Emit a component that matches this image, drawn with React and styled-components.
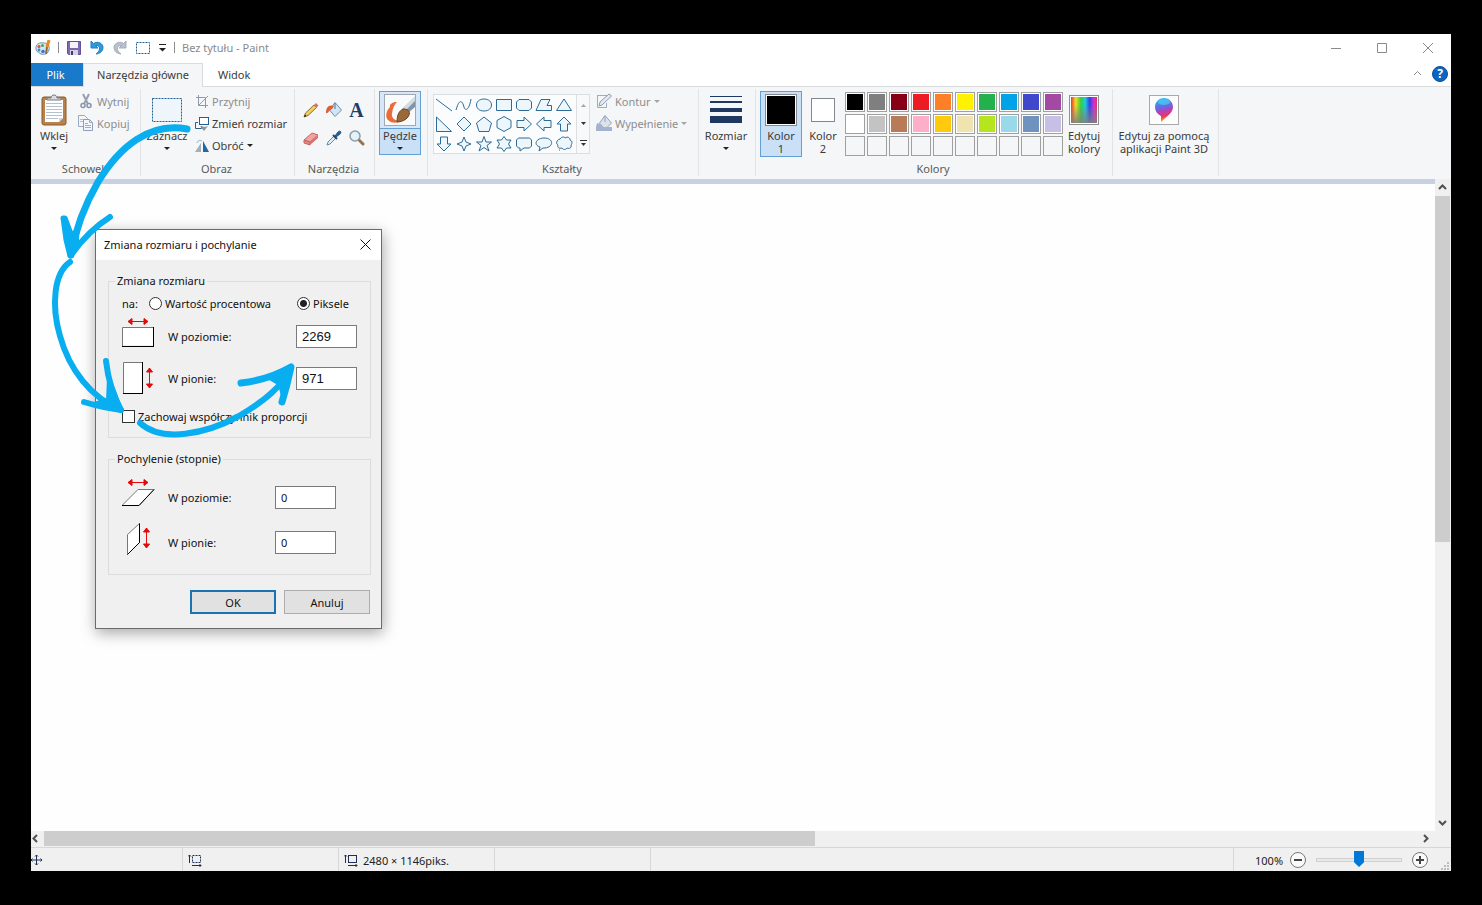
import React from 'react';
import styled, { createGlobalStyle, css } from 'styled-components';

const GlobalStyle = createGlobalStyle`
    * {
        box-sizing: border-box;
    }

    body {
        margin: 0;
        background: #000;
    }

    body, button, input {
        font-family: "Noto Sans", "Open Sans", sans-serif;
        font-size: 11px;
        line-height: 13px;
        color: #3b3b3b;
    }

    button {
        padding: 0;
        border: none;
        background: none;
    }

    svg {
        display: block;
        flex: none;
    }
`;

const Desktop = styled.div`
    min-height: 100vh;
    display: flex;
    padding: 34px 31px;
    background: #000;
`;

const Window = styled.div`
    position: relative;
    flex: 1;
    min-width: 0;
    display: flex;
    flex-direction: column;
    background: #fff;
`;

/* ---------- title bar ---------- */

const TitleBar = styled.header`
    height: 27px;
    display: flex;
    align-items: center;
    justify-content: space-between;
    padding-left: 4px;
`;

const QuickAccess = styled.div`
    display: flex;
    align-items: center;
    gap: 7px;
`;

const Divider = styled.span`
    width: 1px;
    height: 11px;
    background: #8c8c8c;
`;

const ToolButton = styled.button`
    width: 16px;
    display: flex;
    align-items: center;
    justify-content: center;
`;

const Title = styled.h1`
    margin: 0;
    font-size: 11px;
    font-weight: 400;
    color: #8a8a8a;
`;

const WindowButtons = styled.div`
    display: flex;

    button {
        width: 46px;
        height: 27px;
        display: flex;
        align-items: center;
        justify-content: center;
    }
`;

/* ---------- tabs ---------- */

const Tabs = styled.nav`
    height: 26px;
    display: flex;
    align-items: flex-end;
    border-bottom: 1px solid #dadbdc;
`;

const Tab = styled.button`
    height: 23px;
    padding: 0 15px;

    ${({ $kind }) => $kind === 'file' && css`
        min-width: 52px;
        padding: 0 18px 0 15px;
        background: #1979ca;
        color: #fff;
    `}

    ${({ $kind }) => $kind === 'active' && css`
        height: 24px;
        min-width: 120px;
        margin-bottom: -1px;
        padding: 0 13px 2px;
        background: #f5f6f7;
        border: 1px solid #dadbdc;
        border-bottom: none;
    `}
`;

const TabsRight = styled.div`
    margin-left: auto;
    height: 25px;
    padding-right: 3px;
    display: flex;
    align-items: center;
    gap: 10px;
`;

const Help = styled.button`
    width: 16px;
    height: 16px;
    border-radius: 50%;
    border: 1px solid #0a4f96;
    background: #0b66c3;
    color: #fff;
    font-weight: 700;
    font-size: 12px;
    line-height: 14px;
`;

/* ---------- ribbon ---------- */

const Ribbon = styled.div`
    display: flex;
    height: 92px;
    background: #f5f6f7;
`;

const Group = styled.section`
    flex: none;
    width: ${({ $width }) => $width}px;
    margin: 2px 0 3px;
    display: flex;
    flex-direction: column;
    border-right: 1px solid #e2e3e4;
`;

const GroupBody = styled.div`
    flex: 1;
    display: flex;
    align-items: flex-start;
    padding: 2px ${({ $pad }) => $pad || 4}px 0;
    gap: ${({ $gap }) => $gap || 0}px;
`;

const GroupName = styled.div`
    height: 14px;
    padding-right: 2px;
    text-align: center;
    color: #5a5a5a;
`;

const BigButton = styled.button`
    width: ${({ $width }) => $width || 42}px;
    height: 66px;
    flex: none;
    display: flex;
    flex-direction: column;
    align-items: center;
    border: 1px solid transparent;

    ${({ $on }) => $on && css`
        background: #c9e0f7;
        border-color: #629fd4;
    `}

    ${({ $split }) => $split && css`
        height: 64px;
        background: linear-gradient(#d5e7f8 36px, #629fd4 36px, #629fd4 37px, #c9e0f7 37px);
    `}
`;

const BigIcon = styled.span`
    height: 37px;
    display: flex;
    align-items: center;
    justify-content: center;
    padding-bottom: 1px;
    flex: none;
`;

const Column = styled.div`
    display: flex;
    flex-direction: column;
`;

const SmallButton = styled.button`
    height: 22px;
    display: flex;
    align-items: center;
    gap: 3px;
    padding-bottom: 2px;
    white-space: nowrap;
    color: ${({ disabled }) => (disabled ? '#8d8d8d' : '#3b3b3b')};
`;

const Caret = styled.i`
    width: 0;
    border: 3px solid transparent;
    border-top-color: ${({ $dim }) => ($dim ? '#a5a5a5' : '#222')};
    border-bottom: none;
    margin: ${({ $under }) => ($under ? '5px 0 0' : '0')};
`;

const ToolGrid = styled.div`
    display: grid;
    grid-template-columns: repeat(3, 23px);
    grid-template-rows: repeat(2, 28px);
    padding-top: 5px;

    button {
        display: flex;
        align-items: center;
        justify-content: center;
    }
`;

const Gallery = styled.div`
    display: flex;
    width: 157px;
    height: 60px;
    margin: 3px 3px 0 0;
    border: 1px solid #dcdfe2;
    background: #fbfcfd;
`;

const ShapeGrid = styled.div`
    flex: 1;
    display: grid;
    grid-template-columns: repeat(7, 20px);
    grid-template-rows: 19px 20px 20px;

    button {
        display: flex;
        align-items: center;
        justify-content: center;
    }
`;

const GalleryScroll = styled.div`
    width: 13px;
    display: flex;
    flex-direction: column;
    border-left: 1px solid #dcdfe2;
    background: #f8f9fa;

    button {
        flex: 1;
        display: flex;
        align-items: center;
        justify-content: center;
    }
`;

const Swatch = styled.span`
    width: ${({ $size }) => $size}px;
    height: ${({ $size }) => $size}px;
    border: 1px solid #828790;
    background: ${({ $color }) => $color};
    box-shadow: inset 0 0 0 1px #fff;
`;

const Palette = styled.div`
    display: grid;
    grid-template-columns: repeat(10, 20px);
    grid-auto-rows: 20px;
    gap: 2px;
    padding: 1px 0 0 1px;
`;

const PaletteCell = styled.button`
    border: 1px solid #a0a0a0;
    padding: 1px;
    background: ${({ $color }) => $color || '#f5f6f7'};
    background-clip: content-box;
    box-shadow: ${({ $color }) => ($color ? 'inset 0 0 0 1px #fff' : 'none')};
`;

/* ---------- workspace ---------- */

const Workspace = styled.main`
    flex: 1;
    display: flex;
    min-height: 0;
`;

const Canvas = styled.div`
    flex: 1;
    border-top: 5px solid #c8d0e2;
    background: #fefefe;
`;

const ScrollBar = styled.div`
    flex: none;
    display: flex;
    flex-direction: ${({ $vertical }) => ($vertical ? 'column' : 'row')};
    background: #f0f0f0;
    ${({ $vertical }) => ($vertical ? 'width: 16px; padding-right: 1px;' : 'height: 16px; padding: 0 17px 1px 0;')}

    button {
        flex: none;
        display: flex;
        align-items: center;
        justify-content: center;
        ${({ $vertical }) => ($vertical ? 'height: 17px;' : 'width: 13px; padding-right: 4px;')}
    }
`;

const Track = styled.div`
    flex: 1;
    display: flex;
    flex-direction: inherit;
`;

const Thumb = styled.div`
    flex: 0 0 ${({ $size }) => $size}%;
    background: #cdcdcd;
`;

const StatusBar = styled.footer`
    height: 24px;
    display: flex;
    background: #f0f0f0;
    border-top: 1px solid #d7d7d7;
    color: #222;
`;

const StatusCell = styled.div`
    width: ${({ $width }) => $width || 156}px;
    display: flex;
    align-items: center;
    gap: 5px;
    padding: 1px 0 0 ${({ $pad }) => $pad || 0}px;
    border-right: 1px solid #d7d7d7;
`;

const Zoom = styled.div`
    margin-left: auto;
    width: 218px;
    display: flex;
    align-items: center;
    padding: 1px 1px 0 21px;
    gap: 7px;
    border-left: 1px solid #d7d7d7;

    button {
        display: flex;
    }
`;

const Grip = styled.span`
    margin-left: auto;
    align-self: flex-end;
`;

const ZoomSlider = styled.input`
    appearance: none;
    width: 86px;
    height: 18px;
    margin: 0 3px;
    background: none;

    &::-webkit-slider-runnable-track {
        height: 4px;
        border: 1px solid #d0d0d0;
        background: #e7eaea;
    }

    &::-webkit-slider-thumb {
        appearance: none;
        width: 10px;
        height: 16px;
        margin-top: -8px;
        background: #0078d7;
        clip-path: polygon(0 0, 100% 0, 100% 70%, 50% 100%, 0 70%);
    }
`;

/* ---------- dialog ---------- */

const Dialog = styled.form`
    position: absolute;
    left: 64px;
    top: 195px;
    width: 287px;
    padding-bottom: 14px;
    border: 1px solid #6b6b6b;
    background: #f0f0f0;
    box-shadow: 1px 4px 14px rgba(0, 0, 0, 0.35);
    color: #111;
`;

const DialogHeader = styled.div`
    height: 30px;
    display: flex;
    align-items: center;
    justify-content: space-between;
    padding: 0 10px 2px 8px;
    background: #fff;

    h2 {
        margin: 0;
        font-size: 11px;
        font-weight: 400;
    }
`;

const FieldSet = styled.fieldset`
    margin: 14px 10px 0 12px;
    padding: ${({ $pad }) => $pad} 0;
    border: 1px solid #dcdcdc;
    min-width: 0;

    legend {
        margin-left: 6px;
        padding: 0 2px;
        height: 14px;
    }
`;

const UnitRow = styled.div`
    height: 22px;
    display: flex;
    align-items: center;
    padding-left: 13px;

    span {
        width: 27px;
    }
`;

const RatioRow = styled(UnitRow)`
    height: 34px;
`;

const Choice = styled.label`
    display: flex;
    align-items: center;
    gap: 3px;
    width: ${({ $width }) => ($width ? `${$width}px` : 'auto')};
    white-space: nowrap;

    input {
        appearance: none;
        flex: none;
        width: 13px;
        height: 13px;
        margin: 0;
        border: 1px solid #333;
        background: #fff;
    }

    input[type='radio'] {
        border-radius: 50%;
    }

    input[type='radio']:checked {
        background: radial-gradient(#222 0 3px, #fff 4px);
    }
`;

const FieldRow = styled.div`
    display: grid;
    grid-template-columns: 46px ${({ $label }) => $label}px 61px;
    align-items: center;
    height: ${({ $height }) => $height}px;
    padding-left: 13px;

    input {
        width: 61px;
        height: 23px;
        padding: 0 5px;
        border: 1px solid #7a7a7a;
        background: #fff;
        color: #111;
        ${({ $large }) => $large && css`
            font-family: "Liberation Sans", Arial, sans-serif;
            font-size: 13px;
        `}
    }
`;

const DialogActions = styled.div`
    display: flex;
    justify-content: flex-end;
    gap: 8px;
    padding: 15px 11px 0 0;
`;

const DialogButton = styled.button`
    width: 86px;
    height: 24px;
    background: #e1e1e1;
    color: #111;
    border: ${({ $primary }) => ($primary ? '2px solid #1a74b0' : '1px solid #adadad')};
`;

const Arrows = styled.svg`
    position: absolute;
    left: 0;
    top: 0;
    width: 340px;
    height: 420px;
    pointer-events: none;
`;

/* ---------- icons ---------- */

const Icon = ({ w = 16, h = 16, children }) => (
    <svg width={w} height={h} viewBox={`0 0 ${w} ${h}`} fill="none" aria-hidden="true">{children}</svg>
);

const PaintLogo = () => (
    <Icon>
        <path d="M1 9C0 4 5 2 9 3c4 0 6 3 5 7-1 4-5 5-8 4-2 0-1-2-3-2-1 0-2-2-2-3z" fill="#d5e7ef" stroke="#6d98ad" />
        <circle cx="4" cy="6.500" r="1.500" fill="#d9513b" />
        <circle cx="7.500" cy="5.500" r="1.500" fill="#4aa655" />
        <circle cx="4" cy="10" r="1.400" fill="#358cd1" />
        <circle cx="8" cy="11.500" r="1.800" fill="#3e78c9" />
        <path d="M14 0l-2 7" stroke="#e38a26" strokeWidth="3" />
        <path d="M12 7l-1 7" stroke="#92693e" strokeWidth="2" />
    </Icon>
);

const SaveIcon = () => (
    <Icon>
        <path d="M1.500 1.500h13v13h-12l-1-1z" fill="#8167ad" stroke="#66509a" />
        <path d="M4 2h8v6H4z" fill="#f5f3fa" />
        <path d="M4 10h8v5H4z" fill="#d0d5e3" />
        <path d="M5 11h2v4H5z" fill="#473a70" />
    </Icon>
);

const UndoIcon = ({ color, edge, flip }) => (
    <Icon>
        <path
            d="M2 1v7h7L6.500 5.500C9 5 11 6.500 10.500 9c-.3 2-1.500 3.500-3.500 5 4-.3 7-3 7-6.500C14 3.500 9 .5 4.500 3.500z"
            fill={color}
            stroke={edge}
            transform={flip ? 'translate(16 0) scale(-1 1)' : undefined}
        />
    </Icon>
);

const SelectIcon = ({ w, h }) => (
    <Icon w={w} h={h}>
        <rect x="0.500" y="0.500" width={w - 1} height={h - 1} fill={w > 20 ? '#eef5fb' : 'none'} stroke="#1f5f93" strokeDasharray="2 1" />
    </Icon>
);

const PasteIcon = () => (
    <Icon w={26} h={32}>
        <rect x="1" y="3" width="24" height="28" rx="2" fill="#b9824b" stroke="#8a5a2b" />
        <path d="M4 6h18v18l-4 4H4z" fill="#fff" />
        <path d="M22 24h-4v4z" fill="#cfd6df" />
        <path d="M5 9.500h16M5 12.500h16M5 15.500h16M5 18.500h16M5 21.500h16M5 24.500h12" stroke="#b5c0ce" />
        <path d="M6 6V4h4c0-4 6-4 6 0h4v2z" fill="#d9dce0" stroke="#777d86" />
    </Icon>
);

const CutIcon = () => (
    <Icon>
        <path d="M5 1l5 10M11 1L6 11" stroke="#98a1b3" strokeWidth="2" />
        <circle cx="5" cy="12.500" r="2" stroke="#8993a9" strokeWidth="1.500" />
        <circle cx="11" cy="12.500" r="2" stroke="#8993a9" strokeWidth="1.500" />
    </Icon>
);

const CopyIcon = () => (
    <Icon>
        <path d="M.5.500h6l3 3v8h-9z" fill="#f4f6fa" stroke="#9aa9c2" />
        <path d="M2 4.500h4M2 6.500h4" stroke="#b0bccf" />
        <path d="M5.500 4.500h6l3 3v8h-9z" fill="#f4f6fa" stroke="#8c9ebc" />
        <path d="M11.500 4.500v3h3M7 8.500h3M7 10.500h6M7 12.500h6" stroke="#9eadc5" />
    </Icon>
);

const CropIcon = () => (
    <Icon w={14}>
        <path d="M3.500 2v10.500H13M1 4.500h9.500V15M4 12L13 3" stroke="#8c99ae" />
    </Icon>
);

const ResizeIcon = () => (
    <Icon w={14}>
        <rect x="4.500" y="2.500" width="9" height="7" fill="#fff" stroke="#255f96" />
        <path d="M3 7.500H.5v6h6V11" stroke="#255f96" />
        <path d="M5 11l4 5 4-5-3 1z" fill="#8c9299" />
    </Icon>
);

const RotateIcon = () => (
    <Icon w={14}>
        <path d="M0 15L6 6v9z" fill="#a3afb9" />
        <path d="M8 4v11h6z" fill="#1e69a6" />
        <path d="M2 6c1-3 3-3 5-2" stroke="#8bb2d2" />
    </Icon>
);

const PencilIcon = () => (
    <Icon>
        <path d="M1 15l1.500-4L11 3l2.500 2.500L5 13.500z" fill="#f6cb58" stroke="#87703a" />
        <path d="M11 3l2-2 2.500 2.500-2 2z" fill="#d6736d" />
        <path d="M1 15l1-2.500L3.500 14z" fill="#222" />
    </Icon>
);

const BucketIcon = ({ dim }) => (
    <Icon>
        <path d="M9 .5L15.500 8 9 14.500 3.500 8z" fill={dim ? '#dbe2ec' : '#d1e5f4'} stroke={dim ? '#94a2ba' : '#6f8faa'} />
        <path d="M9 1v6" stroke={dim ? '#94a2ba' : '#56718a'} />
        {dim
            ? <path d="M0 12h16v4H0zM1 8l3 1 3 3H0z" fill="#a5b2cd" />
            : <path d="M8 4C3 2 0 5 0 11c2 1 3-3 6-4z" fill="#df5d31" />}
    </Icon>
);

const TextIcon = styled.span`
    font-family: "Liberation Serif", serif;
    font-size: 20px;
    line-height: 20px;
    font-weight: 700;
    color: #1f3e67;
`;

const EraserIcon = () => (
    <Icon>
        <path d="M1 10l8-7 6 2-8 7z" fill="#f1a39f" stroke="#c06863" />
        <path d="M1 10l6 2v3l-6-2z" fill="#e5837c" stroke="#c06863" />
        <path d="M7 12l8-7v3l-8 7z" fill="#d4726c" />
    </Icon>
);

const PickerIcon = () => (
    <Icon>
        <path d="M1 15l1-3 6-6 2 2-6 6z" fill="#ddf0fa" stroke="#658ba6" />
        <path d="M7 5l4 4" stroke="#1d4b7c" strokeWidth="2" />
        <path d="M9 6l3-4c2-2 4 0 2 2l-4 3z" fill="#2467a5" stroke="#1d4b7c" />
    </Icon>
);

const MagnifierIcon = () => (
    <Icon>
        <path d="M10 10l4 4" stroke="#967352" strokeWidth="3" strokeLinecap="round" />
        <circle cx="6" cy="6" r="5" fill="#e3f1fa" stroke="#8f9ba6" strokeWidth="1.500" />
    </Icon>
);

const BrushIcon = () => (
    <Icon w={32} h={32}>
        <rect x="0.500" y="0.500" width="31" height="31" fill="#f8fafc" stroke="#9fa9b3" />
        <path d="M13 8C9 8 5 10 6 13c-4 4-5 10-2 13 4 4 10 3 13 1-6 0-10-3-9-8s2-8 5-11z" fill="#ed6a36" />
        <path d="M31 3v10l-8 7-5-5z" fill="#8195a9" />
        <path d="M31 2L19 14l3 2L31 7z" fill="#d2dce5" />
        <path d="M13 28c0-7 2-12 7-13 5 0 7 4 4 8-2 3-7 5-11 5z" fill="#9b6938" stroke="#6f4722" />
    </Icon>
);

const OutlineIcon = () => (
    <Icon>
        <path d="M1.500 2.500h10M1.500 2v12.500h9V10" stroke="#a0abbd" />
        <path d="M3 13l1-4 9-8 2.500 2L6 12z" fill="#e5eaf2" stroke="#8e9bb1" />
    </Icon>
);

const SizeIcon = () => (
    <Icon w={32} h={30}>
        <path d="M0 1h32v1H0zM0 6h32v2H0zM0 13h32v4H0zM0 21h32v7H0z" fill="#1f3860" />
    </Icon>
);

const RainbowIcon = () => (
    <Icon w={30} h={30}>
        <defs>
            <linearGradient id="hue">
                <stop offset="0" stopColor="#f03030" />
                <stop offset="0.180" stopColor="#f0dc20" />
                <stop offset="0.380" stopColor="#30d040" />
                <stop offset="0.550" stopColor="#20c8e0" />
                <stop offset="0.720" stopColor="#3040e8" />
                <stop offset="0.880" stopColor="#d030d8" />
                <stop offset="1" stopColor="#e83060" />
            </linearGradient>
            <linearGradient id="fade" x2="0" y2="1">
                <stop offset="0.300" stopColor="#808080" stopOpacity="0" />
                <stop offset="1" stopColor="#808080" stopOpacity="0.900" />
            </linearGradient>
        </defs>
        <rect x="0.500" y="0.500" width="29" height="29" fill="#fff" stroke="#8f8f8f" />
        <rect x="2" y="2" width="26" height="26" fill="url(#hue)" />
        <rect x="2" y="2" width="26" height="26" fill="url(#fade)" />
    </Icon>
);

const Paint3DIcon = () => (
    <Icon w={30} h={30}>
        <defs>
            <linearGradient id="drop" x1="0.200" y1="0" x2="0.400" y2="1">
                <stop offset="0" stopColor="#27c5f0" />
                <stop offset="0.350" stopColor="#5b72e8" />
                <stop offset="0.600" stopColor="#b33fb8" />
                <stop offset="0.780" stopColor="#e5395c" />
                <stop offset="1" stopColor="#f8b21e" />
            </linearGradient>
        </defs>
        <rect x="0.500" y="0.500" width="29" height="29" fill="#fcfcfd" stroke="#a9a9a9" />
        <path d="M12 27v-6C8 19 6 16 6 12c0-5 4-9 9-9s9 4 9 9c0 6-6 9-12 15z" fill="url(#drop)" />
        <ellipse cx="15" cy="7" rx="6" ry="3" fill="#4fd6f3" opacity="0.600" />
        <path d="M7 15c4 4 12 2 16-4 0 6-5 9-10 10-3-1-5-3-6-6z" fill="#d738a0" opacity="0.500" />
    </Icon>
);

const Chevron = ({ turn = 0, color = '#505050', width = 2 }) => (
    <svg width="9" height="9" viewBox="0 0 9 9" fill="none" aria-hidden="true">
        <path d="M1 6l3.500-3.500L8 6" stroke={color} strokeWidth={width} transform={`rotate(${turn} 4.500 4.500)`} />
    </svg>
);

const shapes = [
    ['Linia', 'M1 3l16 12'],
    ['Krzywa', 'M1 14C5 0 8 7 9 11s5 4 7-8'],
    ['Owal', 'M9 3c10 0 10 12 0 12S-1 3 9 3z'],
    ['Prostokąt', 'M1.500 3.500h15v11h-15z'],
    ['Zaokrąglony prostokąt', 'M4 3.500h10l2.500 2.500v6L14 14.500H4L1.500 12V6z'],
    ['Wielokąt', 'M6 3.500h9l-3 6h4.500v5H1z'],
    ['Trójkąt', 'M9 3l7.500 11.500h-15z'],
    ['Trójkąt prostokątny', 'M1.500 2l15 14.500h-15z'],
    ['Romb', 'M9 2l7 7-7 7-7-7z'],
    ['Pięciokąt', 'M9 2l7.500 6L14 16.500H4L1.500 8z'],
    ['Sześciokąt', 'M9 1.500l7 4v7l-7 4-7-4v-7z'],
    ['Strzałka w prawo', 'M2 5.500h7V2l7.500 7L9 16v-3.500H2z'],
    ['Strzałka w lewo', 'M16 5.500H9V2L1.500 9 9 16v-3.500h7z'],
    ['Strzałka w górę', 'M5.500 16V9H2l7-7 7 7h-3.500v7z'],
    ['Strzałka w dół', 'M5.500 2v7H2l7 7 7-7h-3.500V2z'],
    ['Gwiazda czteroramienna', 'M9 2l2 5 5 2-5 2-2 5-2-5-5-2 5-2z'],
    ['Gwiazda pięcioramienna', 'M9 1.500l2 5.500h5.500L12 10.500l2 5.500-5-3.500L4 16l2-5.500L1.500 7H7z'],
    ['Gwiazda sześcioramienna', 'M9 1.500L11.500 5H16l-2.500 4 2.500 4h-4.500L9 16.500 6.500 13H2l2.500-4L2 5h4.500z'],
    ['Zaokrąglony dymek', 'M3.500 3h11l2 2v6l-2 2H9l-4 3v-3H3.500l-2-2V5z'],
    ['Owalny dymek', 'M9 3c10 0 10 9 1 10H8l-4 3 1-4C-2 10 1 3 9 3z'],
    ['Dymek myśli', 'M5 4c2-3 5-2 5-1 3-2 5 0 5 2 3 1 2 4 1 5 1 3-2 4-4 3-1 2-4 2-5 0-3 1-5-1-4-3-2-1-2-5 2-6zM4 15h1'],
];

const colors = [
    '#000000', '#7f7f7f', '#880015', '#ed1c24', '#ff7f27', '#fff200', '#22b14c', '#00a2e8', '#3f48cc', '#a349a4',
    '#ffffff', '#c3c3c3', '#b97a57', '#ffaec9', '#ffc90e', '#efe4b0', '#b5e61d', '#99d9ea', '#7092be', '#c8bfe7',
    null, null, null, null, null, null, null, null, null, null,
];

const RedArrowH = () => <path d="M6 4.500h20M6 4.500l4-3v6zM26 4.500l-4-3v6z" fill="#e00b0b" stroke="#e00b0b" />;
const RedArrowV = () => <path d="M27.500 6v20M27.500 6l-3 4h6zM27.500 26l-3-4h6z" fill="#e00b0b" stroke="#e00b0b" />;

const SizeH = () => (
    <Icon w={33} h={38}>
        <RedArrowH />
        <path d="M.5 29V10.500H31" stroke="#777" />
        <path d="M1 11h30v17H1z" fill="#fff" />
        <path d="M0 29.500h32M31.500 10v20" stroke="#000" />
    </Icon>
);

const SizeV = () => (
    <Icon w={33} h={34}>
        <path d="M1.500 31V.5H20" stroke="#777" />
        <path d="M2 1h18v30H2z" fill="#fff" />
        <path d="M1 31.500h20M20.500 0v32" stroke="#000" />
        <RedArrowV />
    </Icon>
);

const SkewH = () => (
    <Icon w={33} h={40}>
        <RedArrowH />
        <path d="M0 27.500L16 11.500h16l-15 16z" fill="#fff" stroke="#777" />
        <path d="M0 27.500h17l15-16" stroke="#000" />
    </Icon>
);

const SkewV = () => (
    <Icon w={33} h={40}>
        <path d="M5.500 31.500v-20l12-11v19z" fill="#fff" stroke="#777" />
        <path d="M5.500 31.500l12-12V.5" stroke="#000" />
        <g transform="translate(-3 -1)"><RedArrowV /></g>
    </Icon>
);

const MoveIcon = () => (
    <Icon w={12} h={12}>
        <path d="M0 6h11M5.500 1v10M4 2.500L5.500 1 7 2.500M4 9.500L5.500 11 7 9.500M9.500 4.500L11 6 9.500 7.500M1.500 4.500L0 6l1.500 1.500" stroke="#1f2f55" />
    </Icon>
);

const ExtentIcon = ({ dashed }) => (
    <Icon w={14} h={13}>
        <path d="M1.500 1v8M0 2.500L1.500 1 3 2.500M4 11.500h9M11.500 10l1.500 1.500-1.500 1.500" stroke="#1f2f55" />
        <rect x="4.500" y="1.500" width="8" height="7" stroke="#1f2f55" strokeDasharray={dashed ? '2 1' : undefined} />
    </Icon>
);

const ZoomIcon = ({ plus }) => (
    <Icon w={16} h={16}>
        <circle cx="8" cy="8" r="7.500" fill="#fafafa" stroke="#777" />
        <path d={plus ? 'M4 8h8M8 4v8' : 'M4 8h8'} stroke="#444" strokeWidth="2" />
    </Icon>
);

const GripIcon = () => (
    <Icon w={9} h={9}>
        <path d="M6 0h2v2H6zM3 3h2v2H3zM6 3h2v2H6zM0 6h2v2H0zM3 6h2v2H3zM6 6h2v2H6z" fill="#bcbcbc" />
    </Icon>
);

const App = () => (
    <>
        <GlobalStyle />
        <Desktop>
            <Window>
                <TitleBar>
                    <QuickAccess>
                        <PaintLogo />
                        <Divider />
                        <ToolButton aria-label="Zapisz"><SaveIcon /></ToolButton>
                        <ToolButton aria-label="Cofnij"><UndoIcon color="#2f9bdc" edge="#1f7fc0" /></ToolButton>
                        <ToolButton aria-label="Ponów"><UndoIcon color="#b7c0cb" edge="#a5b0bc" flip /></ToolButton>
                        <ToolButton aria-label="Zaznaczenie"><SelectIcon w={14} h={12} /></ToolButton>
                        <button aria-label="Dostosuj">
                            <Icon w={9} h={8}><path d="M1 .5h7" stroke="#222" /><path d="M1 4h7L4.500 7.500z" fill="#222" /></Icon>
                        </button>
                        <Divider />
                        <Title>Bez tytułu - Paint</Title>
                    </QuickAccess>
                    <WindowButtons>
                        <button aria-label="Minimalizuj"><Icon w={12} h={12}><path d="M1 6.500h10" stroke="#8a8a8a" /></Icon></button>
                        <button aria-label="Maksymalizuj"><Icon w={12} h={12}><path d="M1.500 1.500h9v9h-9z" stroke="#8a8a8a" /></Icon></button>
                        <button aria-label="Zamknij"><Icon w={12} h={12}><path d="M1 1l10 10M11 1L1 11" stroke="#8a8a8a" /></Icon></button>
                    </WindowButtons>
                </TitleBar>

                <Tabs>
                    <Tab $kind="file">Plik</Tab>
                    <Tab $kind="active">Narzędzia główne</Tab>
                    <Tab>Widok</Tab>
                    <TabsRight>
                        <button aria-label="Zwiń wstążkę"><Chevron color="#8a8a8a" width={1} /></button>
                        <Help>?</Help>
                    </TabsRight>
                </Tabs>

                <Ribbon>
                    <Group $width={110}>
                        <GroupBody $pad={2} $gap={3}>
                            <BigButton>
                                <BigIcon><PasteIcon /></BigIcon>
                                Wklej
                                <Caret $under />
                            </BigButton>
                            <Column>
                                <SmallButton disabled><CutIcon />Wytnij</SmallButton>
                                <SmallButton disabled><CopyIcon />Kopiuj</SmallButton>
                            </Column>
                        </GroupBody>
                        <GroupName>Schowek</GroupName>
                    </Group>

                    <Group $width={154}>
                        <GroupBody $gap={6}>
                            <BigButton $width={44}>
                                <BigIcon><SelectIcon w={30} h={24} /></BigIcon>
                                Zaznacz
                                <Caret $under />
                            </BigButton>
                            <Column>
                                <SmallButton disabled><CropIcon />Przytnij</SmallButton>
                                <SmallButton><ResizeIcon />Zmień rozmiar</SmallButton>
                                <SmallButton><RotateIcon />Obróć<Caret /></SmallButton>
                            </Column>
                        </GroupBody>
                        <GroupName>Obraz</GroupName>
                    </Group>

                    <Group $width={80}>
                        <GroupBody>
                            <ToolGrid>
                                <button aria-label="Ołówek"><PencilIcon /></button>
                                <button aria-label="Wypełnij kolorem"><BucketIcon /></button>
                                <button aria-label="Tekst"><TextIcon>A</TextIcon></button>
                                <button aria-label="Gumka"><EraserIcon /></button>
                                <button aria-label="Selektor kolorów"><PickerIcon /></button>
                                <button aria-label="Lupa"><MagnifierIcon /></button>
                            </ToolGrid>
                        </GroupBody>
                        <GroupName>Narzędzia</GroupName>
                    </Group>

                    <Group $width={53}>
                        <GroupBody>
                            <BigButton $on $split>
                                <BigIcon><BrushIcon /></BigIcon>
                                Pędzle
                                <Caret $under />
                            </BigButton>
                        </GroupBody>
                    </Group>

                    <Group $width={271}>
                        <GroupBody $pad={5} $gap={3}>
                            <Gallery>
                                <ShapeGrid>
                                    {shapes.map(([name, d]) => (
                                        <button key={name} aria-label={name}>
                                            <Icon w={18} h={18}><path d={d} fill={name === 'Linia' || name === 'Krzywa' ? 'none' : '#edf7fb'} stroke="#2c6b98" /></Icon>
                                        </button>
                                    ))}
                                </ShapeGrid>
                                <GalleryScroll>
                                    <button aria-label="Poprzednie kształty"><Icon w={7} h={4}><path d="M1 4l2.500-3L6 4z" fill="#a5a5a5" /></Icon></button>
                                    <button aria-label="Następne kształty"><Icon w={7} h={4}><path d="M1 0h5L3.500 3z" fill="#333" /></Icon></button>
                                    <button aria-label="Więcej kształtów"><Icon w={7} h={7}><path d="M0 .5h7" stroke="#333" /><path d="M1 3h5L3.500 6z" fill="#333" /></Icon></button>
                                </GalleryScroll>
                            </Gallery>
                            <Column>
                                <SmallButton disabled><OutlineIcon />Kontur<Caret $dim /></SmallButton>
                                <SmallButton disabled><BucketIcon dim />Wypełnienie<Caret $dim /></SmallButton>
                            </Column>
                        </GroupBody>
                        <GroupName>Kształty</GroupName>
                    </Group>

                    <Group $width={57}>
                        <GroupBody $pad={3}>
                            <BigButton $width={48}>
                                <BigIcon><SizeIcon /></BigIcon>
                                Rozmiar
                                <Caret $under />
                            </BigButton>
                        </GroupBody>
                    </Group>

                    <Group $width={357}>
                        <GroupBody>
                            <BigButton $on>
                                <BigIcon><Swatch $size={32} $color="#000" /></BigIcon>
                                Kolor<br />1
                            </BigButton>
                            <BigButton>
                                <BigIcon><Swatch $size={24} $color="#fff" /></BigIcon>
                                Kolor<br />2
                            </BigButton>
                            <Palette>
                                {colors.map((color, i) => (
                                    <PaletteCell key={i} $color={color} aria-label={color || 'Kolor niestandardowy'} />
                                ))}
                            </Palette>
                            <BigButton>
                                <BigIcon><RainbowIcon /></BigIcon>
                                Edytuj<br />kolory
                            </BigButton>
                        </GroupBody>
                        <GroupName>Kolory</GroupName>
                    </Group>

                    <Group $width={106}>
                        <GroupBody>
                            <BigButton $width={94}>
                                <BigIcon><Paint3DIcon /></BigIcon>
                                Edytuj za pomocą<br />aplikacji Paint 3D
                            </BigButton>
                        </GroupBody>
                    </Group>
                </Ribbon>

                <Workspace>
                    <Canvas />
                    <ScrollBar $vertical>
                        <button aria-label="W górę"><Chevron /></button>
                        <Track><Thumb $size={56} /></Track>
                        <button aria-label="W dół"><Chevron turn={180} /></button>
                    </ScrollBar>
                </Workspace>
                <ScrollBar>
                    <button aria-label="W lewo"><Chevron turn={270} /></button>
                    <Track><Thumb $size={56} /></Track>
                    <button aria-label="W prawo"><Chevron turn={90} /></button>
                </ScrollBar>

                <StatusBar>
                    <StatusCell $width={152}><MoveIcon /></StatusCell>
                    <StatusCell $pad={5}><ExtentIcon dashed /></StatusCell>
                    <StatusCell $pad={5}><ExtentIcon />2480 × 1146piks.</StatusCell>
                    <StatusCell />
                    <Zoom>
                        100%
                        <button aria-label="Pomniejsz"><ZoomIcon /></button>
                        <ZoomSlider type="range" min="0" max="100" defaultValue="50" aria-label="Powiększenie" />
                        <button aria-label="Powiększ"><ZoomIcon plus /></button>
                        <Grip><GripIcon /></Grip>
                    </Zoom>
                </StatusBar>

                <Dialog onSubmit={(e) => e.preventDefault()}>
                    <DialogHeader>
                        <h2>Zmiana rozmiaru i pochylanie</h2>
                        <button type="button" aria-label="Zamknij okno">
                            <Icon w={11} h={11}><path d="M.5 .5l10 10M10.500 .5l-10 10" stroke="#111" /></Icon>
                        </button>
                    </DialogHeader>
                    <FieldSet $pad="4px">
                        <legend>Zmiana rozmiaru</legend>
                        <UnitRow>
                            <span>na:</span>
                            <Choice $width={148}><input type="radio" name="unit" />Wartość procentowa</Choice>
                            <Choice><input type="radio" name="unit" defaultChecked />Piksele</Choice>
                        </UnitRow>
                        <FieldRow $label={128} $height={44} $large>
                            <SizeH />
                            <label htmlFor="width">W poziomie:</label>
                            <input id="width" defaultValue="2269" />
                        </FieldRow>
                        <FieldRow $label={128} $height={41} $large>
                            <SizeV />
                            <label htmlFor="height">W pionie:</label>
                            <input id="height" defaultValue="971" />
                        </FieldRow>
                        <RatioRow>
                            <Choice><input type="checkbox" />Zachowaj współczynnik proporcji</Choice>
                        </RatioRow>
                    </FieldSet>
                    <FieldSet $pad="9px">
                        <legend>Pochylenie (stopnie)</legend>
                        <FieldRow $label={107} $height={45}>
                            <SkewH />
                            <label htmlFor="skewX">W poziomie:</label>
                            <input id="skewX" defaultValue="0" />
                        </FieldRow>
                        <FieldRow $label={107} $height={45}>
                            <SkewV />
                            <label htmlFor="skewY">W pionie:</label>
                            <input id="skewY" defaultValue="0" />
                        </FieldRow>
                    </FieldSet>
                    <DialogActions>
                        <DialogButton $primary>OK</DialogButton>
                        <DialogButton type="button">Anuluj</DialogButton>
                    </DialogActions>
                </Dialog>

                <Arrows viewBox="31 34 340 420" fill="none" stroke="#08aeef" strokeWidth="6" strokeLinecap="round" strokeLinejoin="round" aria-hidden="true">
                    <path d="M187 129C150 122 120 146 98 182C84 206 75 232 71 255" strokeWidth="7" />
                    <path d="M110 217Q88 231 71 255" />
                    <path d="M63 218L66 240 70 256 76 246 77 232 71 234 65 218z" fill="#08aeef" strokeWidth="5" />
                    <path d="M70 262C54 273 51 305 60 336C69 369 91 398 121 410" />
                    <path d="M106 361Q109 388 121 410Q104 408 84 402" />
                    <path d="M109 378L121 410 94 404 108 400z" fill="#08aeef" strokeWidth="4" />
                    <path d="M140 423C162 443 206 434 239 416C266 400 282 386 291 368" />
                    <path d="M241 383Q268 380 291 367Q287 386 282 402" strokeWidth="7" />
                    <path d="M268 377Q280 372 291 366L288 380 283 396 280 384z" fill="#08aeef" strokeWidth="4" />
                </Arrows>
            </Window>
        </Desktop>
    </>
);

export default App;
